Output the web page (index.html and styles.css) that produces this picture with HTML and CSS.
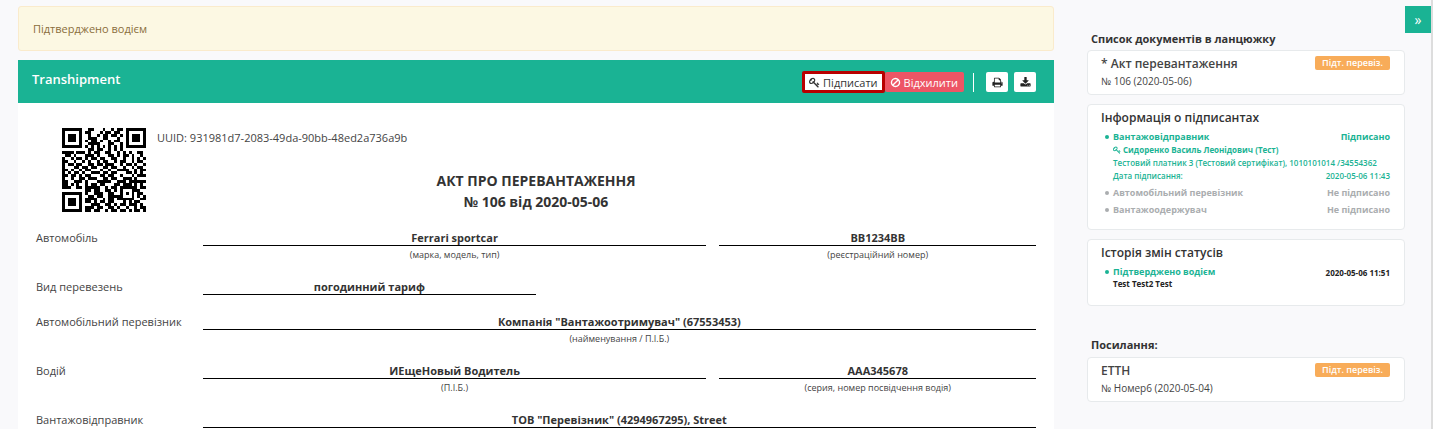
FILE: index.html
```html
<!DOCTYPE html>
<html lang="uk">
<head>
<meta charset="utf-8">
<title>Transhipment</title>
<link rel="stylesheet" href="styles.css">
</head>
<body>
<svg class="sprite" aria-hidden="true">
  <symbol id="key" viewBox="0 0 1792 1792"><path d="M832 512q0-80-56-136t-136-56-136 56-56 136q0 42 19 83-41-19-83-19-80 0-136 56t-56 136 56 136 136 56 136-56 56-136q0-42-19-83 41 19 83 19 80 0 136-56t56-136zm851 704q0 17-49 66t-66 49q-9 0-28.500-16t-36.500-33-38.500-40-24.500-26l-96 96 220 220q28 28 28 68 0 42-39 81t-81 39q-40 0-68-28l-671-671q-176 131-365 131-163 0-265.500-102.500t-102.500-265.500q0-160 95-313t248-248 313-95q163 0 265.500 102.500t102.500 265.500q0 189-131 365l355 355 96-96q-3-3-26-24.500t-40-38.500-33-36.500-16-28.500q0-17 49-66t66-49q13 0 23 10 6 6 46 44.500t82 79.500 86.500 86 73 78 28.500 41z"/></symbol>
  <symbol id="ban" viewBox="0 0 1792 1792"><path d="M1440 893q0-161-87-295l-754 753q137 89 297 89 111 0 211.500-43.500t173.500-116.500 116-174.500 43-212.500zm-999 299l755-754q-135-91-300-91-148 0-273 73t-198 199-73 274q0 162 89 299zm1223-299q0 157-61 300t-163.500 246-245 164-298.500 61-298.500-61-245-164-163.500-246-61-300 61-299.500 163.500-245.500 245-164 298.500-61 298.500 61 245 164 163.500 245.500 61 299.500z"/></symbol>
  <symbol id="print" viewBox="0 0 1792 1792"><path d="M448 1536h896v-256h-896v256zm0-640h896v-384h-160q-40 0-68-28t-28-68v-160h-640v640zm1152 64q0-26-19-45t-45-19-45 19-19 45 19 45 45 19 45-19 19-45zm128 0v416q0 13-9.500 22.500t-22.500 9.500h-224v160q0 40-28 68t-68 28h-960q-40 0-68-28t-28-68v-160h-224q-13 0-22.500-9.500t-9.500-22.500v-416q0-79 56.500-135.500t135.500-56.500h64v-544q0-40 28-68t68-28h672q40 0 88 20t76 48l152 152q28 28 48 76t20 88v256h64q79 0 135.500 56.500t56.500 135.500z"/></symbol>
  <symbol id="download" viewBox="0 0 1792 1792"><path d="M1344 1344q0-26-19-45t-45-19-45 19-19 45 19 45 45 19 45-19 19-45zm256 0q0-26-19-45t-45-19-45 19-19 45 19 45 45 19 45-19 19-45zm128-224v320q0 40-28 68t-68 28h-1472q-40 0-68-28t-28-68v-320q0-40 28-68t68-28h465l135 136q58 56 136 56t136-56l136-136h464q40 0 68 28t28 68zm-325-569q17 41-14 70l-448 448q-18 19-45 19t-45-19l-448-448q-31-29-14-70 17-39 59-39h256v-448q0-26 19-45t45-19h256q26 0 45 19t19 45v448h256q42 0 59 39z"/></symbol>
</svg>
<div class="page">
  <main class="main">
    <div class="alert">Підтверджено водієм</div>
    <section class="panel">
      <header class="panel-head">
        <h1 class="panel-title">Transhipment</h1>
        <div class="actions">
          <button class="btn btn-sign" type="button"><svg class="icon"><use href="#key"/></svg>Підписати</button>
          <button class="btn btn-reject" type="button"><svg class="icon"><use href="#ban"/></svg>Відхилити</button>
          <span class="divider"></span>
          <button class="btn btn-icon" type="button" aria-label="Друк"><svg class="icon"><use href="#print"/></svg></button>
          <button class="btn btn-icon" type="button" aria-label="Завантажити"><svg class="icon"><use href="#download"/></svg></button>
        </div>
      </header>
      <div class="document">
        <div class="ident">
          <svg class="qr" viewBox="0 0 29 29" shape-rendering="crispEdges" role="img" aria-label="QR"><path id="qr-modules"/></svg>
          <span>UUID: 931981d7-2083-49da-90bb-48ed2a736a9b</span>
        </div>
        <h2 class="doc-title">АКТ ПРО ПЕРЕВАНТАЖЕННЯ<br>№ 106 від 2020-05-06</h2>
        <div class="row">
          <div class="label">Автомобіль</div>
          <div class="fields">
            <div class="field wide"><div class="value">Ferrari sportcar</div><div class="caption">(марка, модель, тип)</div></div>
            <div class="field narrow"><div class="value">ВВ1234ВВ</div><div class="caption">(реєстраційний номер)</div></div>
          </div>
        </div>
        <div class="row">
          <div class="label">Вид перевезень</div>
          <div class="fields"><div class="field short"><div class="value">погодинний тариф</div></div></div>
        </div>
        <div class="row">
          <div class="label">Автомобільний перевізник</div>
          <div class="fields"><div class="field full"><div class="value">Компанія "Вантажоотримувач" (67553453)</div><div class="caption">(найменування / П.І.Б.)</div></div></div>
        </div>
        <div class="row">
          <div class="label">Водій</div>
          <div class="fields">
            <div class="field wide"><div class="value">ИЕщеНовый Водитель</div><div class="caption">(П.І.Б.)</div></div>
            <div class="field narrow"><div class="value">ААА345678</div><div class="caption">(серия, номер посвідчення водія)</div></div>
          </div>
        </div>
        <div class="row">
          <div class="label">Вантажовідправник</div>
          <div class="fields"><div class="field full"><div class="value">ТОВ "Перевізник" (4294967295), Street</div></div></div>
        </div>
      </div>
    </section>
  </main>
  <aside class="side">
    <button class="collapse" type="button" aria-label="Згорнути панель">»</button>
    <h3 class="side-title">Список документів в ланцюжку</h3>
    <a class="card doc" href="#act">
      <span class="doc-text"><span class="doc-name">* Акт перевантаження</span><span class="doc-num">№ 106 (2020-05-06)</span></span>
      <span class="badge">Підт. перевіз.</span>
    </a>
    <section class="card signers">
      <h4 class="card-title">Інформація о підписантах</h4>
      <ul class="list">
        <li class="done">
          <div class="line"><b>Вантажовідправник</b><b>Підписано</b></div>
          <div class="signer"><svg class="icon-small"><use href="#key"/></svg>Сидоренко Василь Леонідович (Тест)</div>
          <div class="detail">Тестовий платник 3 (Тестовий сертифікат), 1010101014 /34554362</div>
          <div class="line detail"><span>Дата підписання:</span><span>2020-05-06 11:43</span></div>
        </li>
        <li class="pending"><div class="line"><b>Автомобільний перевізник</b><b>Не підписано</b></div></li>
        <li class="pending"><div class="line"><b>Вантажоодержувач</b><b>Не підписано</b></div></li>
      </ul>
    </section>
    <section class="card history">
      <h4 class="card-title">Історія змін статусів</h4>
      <ul class="list">
        <li class="done">
          <div class="line"><b>Підтверджено водієм</b><b class="note">2020-05-06 11:51</b></div>
          <div class="note">Test Test2 Test</div>
        </li>
      </ul>
    </section>
    <h3 class="side-title links-title">Посилання:</h3>
    <a class="card doc" href="#ettn">
      <span class="doc-text"><span class="doc-name">ЕТТН</span><span class="doc-num">№ Номер6 (2020-05-04)</span></span>
      <span class="badge">Підт. перевіз.</span>
    </a>
  </aside>
</div>
<script src="qr.js"></script>
</body>
</html>
```
FILE: styles.css
```css
* { box-sizing: border-box; }
body {
  margin: 0;
  overflow: hidden;
  background: #f9f9fb;
  color: #444;
  font: 11px/16px "Open Sans", "Noto Sans", sans-serif;
}
h1, h2, h3, h4, ul { margin: 0; padding: 0; }
button { font: inherit; cursor: pointer; }
a { color: inherit; text-decoration: none; }
.sprite { display: none; }
.page {
  display: grid;
  grid-template-columns: minmax(0, 1fr) 346px;
  gap: 33px;
  height: 100vh;
  padding-left: 18px;
}
.main { padding-top: 6px; }
.alert {
  padding: 14px;
  border: 1px solid #faebcc;
  border-radius: 3px;
  background: #fcf8e3;
  color: #8a6d3b;
  line-height: 15px;
}
.panel { margin-top: 9px; background: #fff; }
.panel-head {
  display: flex;
  justify-content: space-between;
  align-items: center;
  height: 43px;
  padding: 0 18px 0 14px;
  background: #1ab394;
  color: #fff;
}
.panel-title { padding-bottom: 5px; font-size: 13px; font-weight: 600; }
.actions { display: flex; align-items: center; padding-top: 1px; }
.btn {
  display: flex;
  align-items: center;
  gap: 3px;
  height: 20px;
  padding: 1px 6px 0;
  border: 0;
  border-radius: 2px;
  font-size: 11px;
}
.icon { width: 11px; height: 11px; fill: currentColor; }
.btn-sign { height: 22px; padding: 1px 4px 0; border: 3px solid #b80000; background: #fff; color: #333; }
.btn-reject { padding: 1px 6px 0 5px; background: #ed5565; color: #fff; }
.divider { width: 1px; height: 19px; margin: 0 12px 0 9px; background: #fff; }
.btn-icon { justify-content: center; width: 22px; padding: 0; background: #fff; color: #222; }
.btn-icon + .btn-icon { margin-left: 6px; }
.document { padding: 25px 18px 18px; }
.ident { display: flex; gap: 11px; height: 42px; padding-left: 26px; line-height: 20px; }
.qr { flex: none; width: 84px; height: 84px; }
.doc-title {
  margin-bottom: 17px;
  color: #333;
  font-size: 14px;
  line-height: 21px;
  font-weight: 700;
  text-align: center;
}
.row { display: grid; grid-template-columns: 1fr 5fr; margin-bottom: 18px; }
.label { height: 17px; line-height: 18px; }
.fields { display: flex; justify-content: space-between; }
.field { text-align: center; }
.wide { flex: 503 1 0; margin-right: 13px; }
.narrow { flex: 316 1 0; }
.short { width: 40%; }
.full { width: 100%; }
.value { height: 17px; border-bottom: 1px solid #000; color: #333; font-weight: 700; line-height: 18px; }
.caption { height: 14px; font-size: 9px; line-height: 18px; }
.side {
  position: relative;
  padding: 31px 26px 0 0;
  border-right: 2px solid #ddd;
}
.collapse {
  position: absolute;
  top: 6px;
  right: 0;
  width: 26px;
  height: 27px;
  padding: 0;
  border: 0;
  background: #1ab394;
  color: #fff;
  font-size: 14px;
}
.side-title { margin: 0 0 3px 4px; color: #333; font-size: 11px; font-weight: 700; }
.links-title { margin-top: 31px; margin-bottom: 4px; }
.card {
  display: block;
  margin-bottom: 9px;
  padding: 4px 14px 4px 13px;
  border: 1px solid #e7eaec;
  border-radius: 4px;
  background: #fff;
}
.doc { display: flex; justify-content: space-between; align-items: flex-start; height: 45px; }
.doc-text { display: flex; flex-direction: column; line-height: 18px; }
.doc-name { font-size: 12px; font-weight: 600; }
.doc-num { font-size: 10px; line-height: 16px; }
.badge {
  padding: 0 7px;
  margin-top: 1px;
  border-radius: 2px;
  background: #f8ac59;
  color: #fff;
  font-size: 9px;
  line-height: 14px;
  font-weight: 600;
}
.card-title { color: #333; font-size: 12px; font-weight: 600; line-height: 18px; }
.signers { height: 126px; }
.history { height: 67px; }
.list { padding: 3px 0 0 12px; list-style: none; font-size: 9px; line-height: 13px; }
.list li { position: relative; margin-bottom: 4px; }
.list li::before {
  content: "";
  position: absolute;
  left: -8px;
  top: 5px;
  width: 4px;
  height: 4px;
  border-radius: 50%;
  background: currentColor;
}
.line { display: flex; justify-content: space-between; }
.done { color: #1ab394; }
.pending { color: #aaadaf; }
.signer { display: flex; align-items: center; gap: 2px; font-size: 8px; font-weight: 700; }
.icon-small { width: 8px; height: 8px; fill: currentColor; }
.detail { font-size: 8px; line-height: 13px; font-weight: 600; }
.note { color: #222; font-size: 8px; font-weight: 700; line-height: 12px; }
.line .note { line-height: 15px; height: 13px; }
```
FILE: qr.js
```js
const rows = [
  "11111110011000100101101111111",
  "10000010110001011011001000001",
  "10111010010010110110101011101",
  "10111010011100110001001011101",
  "10111010101101001011001011101",
  "10000010011110001100101000001",
  "11111110101010101010101111111",
  "00000000011011001010100000000",
  "11110111010110011001010100110",
  "01101000111010001101011010010",
  "10010110101101100110010010101",
  "11001001010010110010110010110",
  "10110110011011011100101101001",
  "10001101101100110110010010110",
  "11010010110001001001111001011",
  "10101101001110110110001101010",
  "11011010110001101100100010111",
  "10010011011100110110011101000",
  "11001110100011111001110111111",
  "11010100101101100011011101010",
  "11100110111110010110111111011",
  "00000000110110011010100011100",
  "11111110100111001100101010110",
  "10000010011011001111100010101",
  "10111010111100101101111110011",
  "10111010110101101100010101100",
  "10111010001110011010110111010",
  "10000010111011001101001001011",
  "11111110110110010110110101101"
];

const path = rows.flatMap((row, y) =>
  [...row.matchAll(/1+/g)].map(run => `M${run.index} ${y}h${run[0].length}v1h-${run[0].length}z`)
).join("");

document.getElementById("qr-modules").setAttribute("d", path);
```
